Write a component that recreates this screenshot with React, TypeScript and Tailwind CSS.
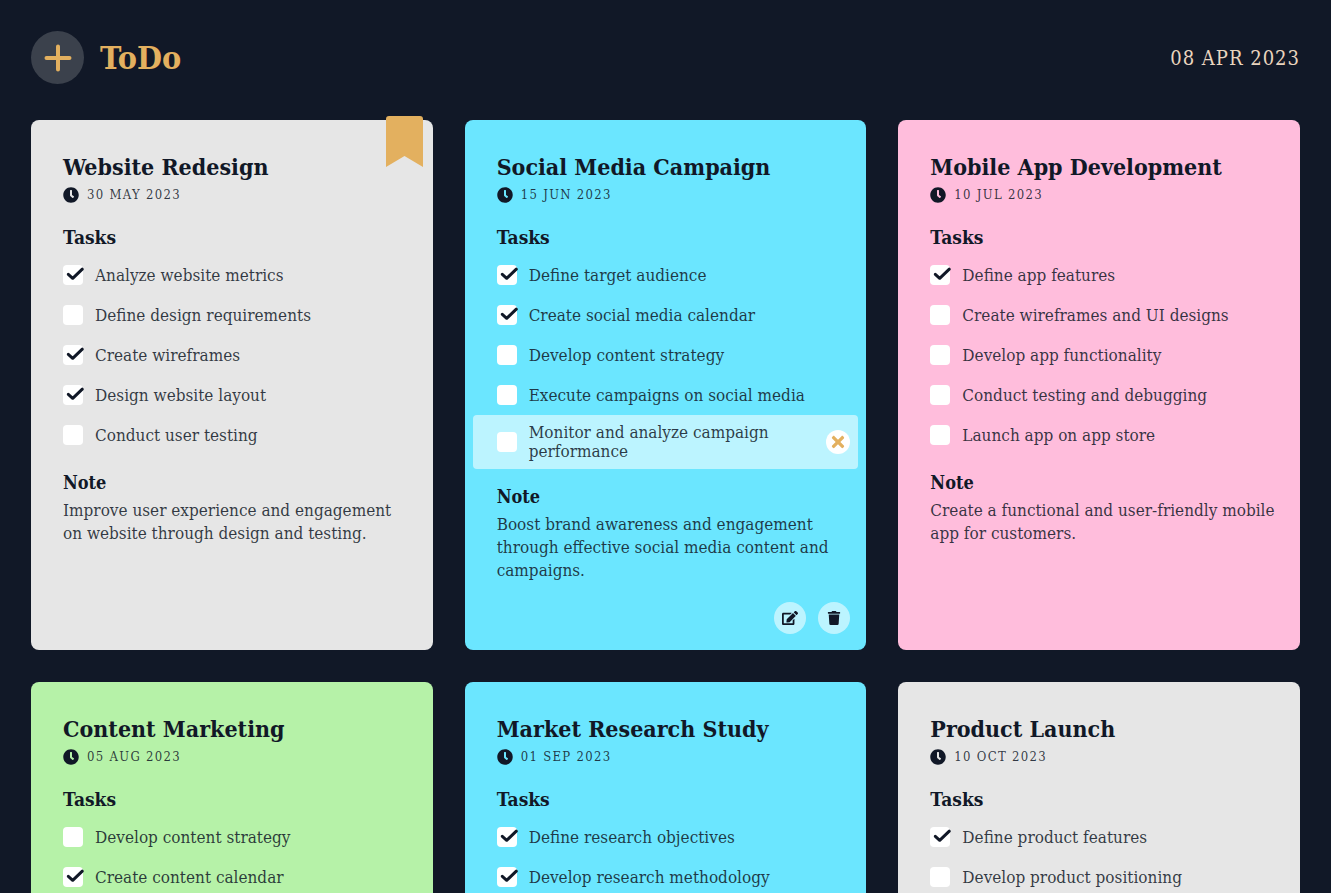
import { useState } from "react";
import { FaClock, FaEdit, FaTimes, FaTrash } from "react-icons/fa";

type Task = { label: string; done: boolean; active?: boolean };
type Todo = {
  title: string;
  date: string;
  color: string;
  tasks: Task[];
  note: string;
  bookmarked?: boolean;
  active?: boolean;
};

const todos: Todo[] = [
  {
    title: "Website Redesign",
    date: "30 MAY 2023",
    color: "bg-[#e6e6e6]",
    bookmarked: true,
    tasks: [
      { label: "Analyze website metrics", done: true },
      { label: "Define design requirements", done: false },
      { label: "Create wireframes", done: true },
      { label: "Design website layout", done: true },
      { label: "Conduct user testing", done: false },
    ],
    note: "Improve user experience and engagement on website through design and testing.",
  },
  {
    title: "Social Media Campaign",
    date: "15 JUN 2023",
    color: "bg-[#6be6ff]",
    active: true,
    tasks: [
      { label: "Define target audience", done: true },
      { label: "Create social media calendar", done: true },
      { label: "Develop content strategy", done: false },
      { label: "Execute campaigns on social media", done: false },
      { label: "Monitor and analyze campaign performance", done: false, active: true },
    ],
    note: "Boost brand awareness and engagement through effective social media content and campaigns.",
  },
  {
    title: "Mobile App Development",
    date: "10 JUL 2023",
    color: "bg-[#ffbddc]",
    tasks: [
      { label: "Define app features", done: true },
      { label: "Create wireframes and UI designs", done: false },
      { label: "Develop app functionality", done: false },
      { label: "Conduct testing and debugging", done: false },
      { label: "Launch app on app store", done: false },
    ],
    note: "Create a functional and user-friendly mobile app for customers.",
  },
  {
    title: "Content Marketing",
    date: "05 AUG 2023",
    color: "bg-[#b6f2a8]",
    tasks: [
      { label: "Develop content strategy", done: false },
      { label: "Create content calendar", done: true },
    ],
    note: "",
  },
  {
    title: "Market Research Study",
    date: "01 SEP 2023",
    color: "bg-[#6be6ff]",
    tasks: [
      { label: "Define research objectives", done: true },
      { label: "Develop research methodology", done: true },
    ],
    note: "",
  },
  {
    title: "Product Launch",
    date: "10 OCT 2023",
    color: "bg-[#e6e6e6]",
    tasks: [
      { label: "Define product features", done: true },
      { label: "Develop product positioning", done: false },
    ],
    note: "",
  },
];

function TaskRow({ task }: { task: Task }) {
  const [done, setDone] = useState(task.done);
  return (
    <li
      className={`flex min-h-10 items-center rounded pr-2 pl-6 ${task.active ? "bg-white/55 py-2" : ""}`}
    >
      <label className="flex grow items-center gap-3 text-[17px] leading-[19px] text-[#111827]/85">
        <span className="relative block size-5 shrink-0">
          <input
            type="checkbox"
            checked={done}
            onChange={() => setDone(!done)}
            className="block size-5 appearance-none rounded bg-white"
          />
          {done && (
            <svg
              viewBox="0 0 20 20"
              className="pointer-events-none absolute inset-0 size-5 overflow-visible text-[#111827]"
              fill="none"
              stroke="currentColor"
              strokeWidth="3"
              strokeLinecap="round"
              strokeLinejoin="round"
            >
              <path d="M5.300 9.300 9.700 13.300 19.300 4.200" />
            </svg>
          )}
        </span>
        <span>{task.label}</span>
      </label>
      {task.active && (
        <button
          aria-label="Remove task"
          className="flex size-6 shrink-0 items-center justify-center rounded-full bg-white text-[#e3b05f]"
        >
          <FaTimes className="size-[18px]" />
        </button>
      )}
    </li>
  );
}

function Card({ todo }: { todo: Todo }) {
  return (
    <article className={`relative flex flex-col rounded-lg px-2 pt-8 pb-4 text-[#111827] ${todo.color}`}>
      {todo.bookmarked && (
        <svg viewBox="0 0 37 51" className="absolute -top-1 right-2.5 h-[51px] w-[37px] text-[#e3b05f]">
          <path d="M3 0h31a3 3 0 0 1 3 3v48L18.500 40 0 51V3a3 3 0 0 1 3-3Z" fill="currentColor" />
        </svg>
      )}
      <header className="px-6">
        <h2 className="text-[23px] leading-[30px] font-bold">{todo.title}</h2>
        <p className="mt-[3px] flex h-5 items-center gap-2 text-[13px] tracking-widest text-[#111827]/85">
          <FaClock className="size-4 text-[#111827]" />
          {todo.date}
        </p>
      </header>
      <h3 className="mt-5 px-6 text-[19px] leading-6 font-bold">Tasks</h3>
      <ul className="mt-1.5">
        {todo.tasks.map((task) => (
          <TaskRow key={task.label} task={task} />
        ))}
      </ul>
      {todo.note && (
        <section className="mt-4 pr-4 pl-6">
          <h3 className="text-[18px] leading-6 font-bold">Note</h3>
          <p className="mt-1 text-[17px] leading-[23px] text-[#111827]/85">{todo.note}</p>
        </section>
      )}
      {todo.active && (
        <footer className="mt-5 flex justify-end gap-3 pr-2">
          <button aria-label="Edit" className="flex size-8 items-center justify-center rounded-full bg-white/55">
            <FaEdit className="size-4" />
          </button>
          <button aria-label="Delete" className="flex size-8 items-center justify-center rounded-full bg-white/55">
            <FaTrash className="size-3.5" />
          </button>
        </footer>
      )}
    </article>
  );
}

export default function App() {
  return (
    <div className="h-screen overflow-hidden bg-[#111827] px-[31px] pt-[31px] font-['Roboto_Slab','DejaVu_Serif_Condensed','DejaVu_Serif',serif]">
      <header className="flex items-center justify-between">
        <div className="flex items-center gap-4">
          <button
            aria-label="Add list"
            className="flex size-[53px] items-center justify-center rounded-full bg-[#3b414c] text-[#e3b05f]"
          >
            <svg
              viewBox="0 0 28 28"
              className="size-7"
              fill="none"
              stroke="currentColor"
              strokeWidth="4"
              strokeLinecap="round"
            >
              <path d="M14 2.500v23M2.500 14h23" />
            </svg>
          </button>
          <h1 className="text-[32px] leading-10 font-bold text-[#e3b05f]">ToDo</h1>
        </div>
        <p className="text-[20px] tracking-wider text-[#ead5bf]">08 APR 2023</p>
      </header>
      <main className="mt-9 grid grid-cols-3 gap-8">
        {todos.map((todo) => (
          <Card key={todo.title} todo={todo} />
        ))}
      </main>
    </div>
  );
}
